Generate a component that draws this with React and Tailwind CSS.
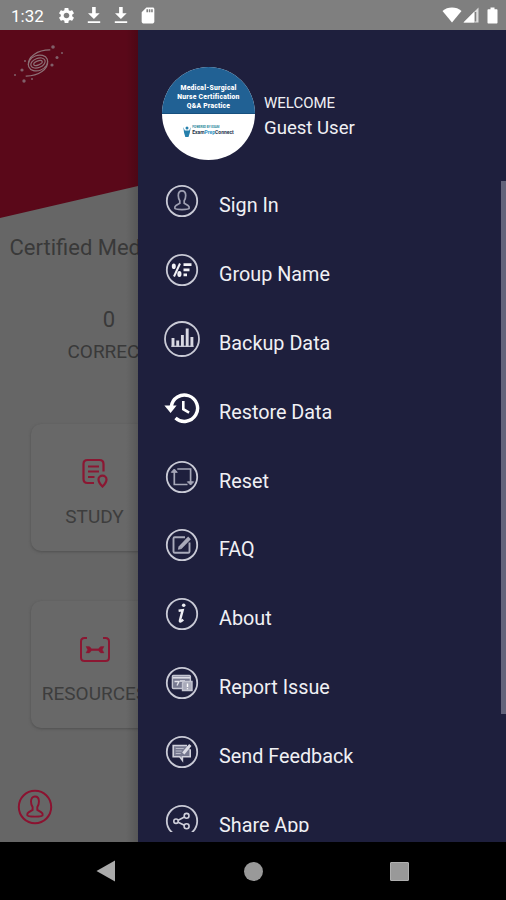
import { MdSettings, MdSdCard } from "react-icons/md";

const Circle = ({ r = 15.2, children }) => (
  <svg viewBox="0 0 36 36" className="w-9 h-9 shrink-0" fill="none" stroke="#c9cad6" strokeWidth="1.4">
    <circle cx="18" cy="18" r={r} strokeWidth="1.8" />
    {children}
  </svg>
);

const personPath =
  "M14.3 12.5c0-3 1.4-4.7 3.7-4.7s3.7 1.7 3.7 4.7c0 2.6-.8 4.2-1.5 5.2v2.6l3.8 2.3c1 .6 1.3 1.6 1.2 2.6-.2 1.8-14.2 1.8-14.4 0-.1-1 .2-2 1.2-2.6l3.8-2.3v-2.6c-.7-1-1.5-2.6-1.5-5.2z";

const SignInIcon = () => (
  <Circle>
    <path d={personPath} stroke="#9fa0b2" strokeWidth="1.7" />
  </Circle>
);

const GroupIcon = () => (
  <Circle>
    <g stroke="#f2f2f6" strokeWidth="2">
      <path d="M16 11.5L10 24.5" />
      <ellipse cx="9.8" cy="14.3" rx="1" ry="1.8" />
      <ellipse cx="15.4" cy="22" rx="1.1" ry="2" />
      <path d="M19.5 12.7h8M19.5 17.8h6M19.5 22.8h3.5" strokeWidth="2.8" />
    </g>
  </Circle>
);

const BackupIcon = () => (
  <Circle r={17}>
    <path d="M9 17v9M13.7 19.5V26M18.4 14v12M23.2 7.5V26M27.9 16v10" stroke="#d8d8e2" strokeWidth="2.9" />
    <path d="M7.5 25.3h22" strokeWidth="1.3" />
  </Circle>
);

const RestoreIcon = () => (
  <svg viewBox="0 0 36 36" className="w-9 h-9 shrink-0" fill="none" stroke="#fff">
    <path d="M7.3 16.5A13.2 13.2 0 1 1 11.5 28" strokeWidth="3.4" />
    <path d="M.4 15.6h12.2L6.6 23z" fill="#fff" stroke="none" />
    <path d="M19.3 11v8.2l5.8 3.4" strokeWidth="2.6" />
  </svg>
);

const ResetIcon = () => (
  <Circle>
    <g stroke="#a5a6b7" strokeWidth="1.7">
      <path d="M10.3 11v14.5h13.2M13.3 10h13.3V24" />
      <path d="M7.3 13.3l3-3.3 3 3.3zM23.4 22.8l3.2 3.2 3-3.2z" fill="#a5a6b7" strokeWidth="1" />
    </g>
  </Circle>
);

const FaqIcon = () => (
  <Circle>
    <g stroke="#a9aaba">
      <path d="M21 10.3H10.8c-.8 0-1.3.5-1.3 1.3v12.9c0 .8.5 1.3 1.3 1.3h13.4c.8 0 1.3-.5 1.3-1.3V15.5" strokeWidth="1.9" />
      <path d="M16.5 20.2l9-9.3" strokeWidth="3.8" />
      <path d="M14.4 22.3l.7-3.2 2.4 2.4z" fill="#a9aaba" strokeWidth=".8" />
    </g>
  </Circle>
);

const AboutIcon = () => (
  <Circle>
    <circle cx="19.7" cy="9.3" r="1.8" fill="#eeeef4" stroke="none" />
    <path d="M14.6 14.7l4.1-.6-2.7 10.2c-.4 1.7.6 1.9 3.2-.6" stroke="#eeeef4" strokeWidth="2.4" />
  </Circle>
);

const ReportIcon = () => (
  <Circle>
    <rect x="8.4" y="10.5" width="18" height="13" rx="1" stroke="#c4c5d1" fill="#777990" />
    <path d="M9 12.7h17" stroke="#dcdce5" strokeWidth="1.8" />
    <path d="M10.5 16.5h4.5l-2 4M16 16h5" stroke="#e4e4eb" />
    <path d="M19.5 16.5h8.5v9h-9.5v-7.2z" fill="#a9aaba" stroke="#c4c5d1" />
    <path d="M23.5 18.5v3.5M23.5 23.3v1" stroke="#fff" />
  </Circle>
);

const FeedbackIcon = () => (
  <Circle>
    <path d="M23 11.5H9.2v11.3h6.5l2.7 3.5v-3.5h7.8v-7.5" fill="#777990" stroke="#d0d0db" strokeWidth="1.6" />
    <path d="M11.7 14.5h8M11.7 17h6M11.7 19.5h5" stroke="#b8b9c7" strokeWidth="1.2" />
    <path d="M19.3 19.5l7-8.5" stroke="#dcdce5" strokeWidth="3" />
  </Circle>
);

const ShareIcon = () => (
  <Circle>
    <g stroke="#d0d0db" strokeWidth="1.6">
      <circle cx="12" cy="18.2" r="2.2" />
      <circle cx="22.6" cy="12.8" r="2.4" />
      <circle cx="22.6" cy="23.3" r="2.5" />
      <path d="M14.2 17.2l6.2-3.2M14.2 19.3l6.2 3" />
    </g>
  </Circle>
);

const menuItems = [
  { label: "Sign In", Icon: SignInIcon },
  { label: "Group Name", Icon: GroupIcon },
  { label: "Backup Data", Icon: BackupIcon },
  { label: "Restore Data", Icon: RestoreIcon },
  { label: "Reset", Icon: ResetIcon },
  { label: "FAQ", Icon: FaqIcon },
  { label: "About", Icon: AboutIcon },
  { label: "Report Issue", Icon: ReportIcon },
  { label: "Send Feedback", Icon: FeedbackIcon },
  { label: "Share App", Icon: ShareIcon },
];

const Download = () => (
  <svg viewBox="0 0 14 18" className="w-3.5 h-[18px]" fill="#fff">
    <path d="M5.1 1h3.6v6.3h4L6.9 13 1 7.3h4.1zM.8 15.2h12.4V17H.8z" />
  </svg>
);

const StatusBar = () => (
  <div className="h-[30px] shrink-0 bg-[#7f7f7f] flex items-center justify-between pl-[11px] pr-[8px] text-white">
    <div className="flex items-center">
      <span className="w-[46px] text-[17px] leading-[30px] pt-0.5">1:32</span>
      <MdSettings className="w-[19px] h-[19px]" />
      <div className="flex gap-[13px] ml-[10.5px]">
        <Download />
        <Download />
      </div>
      <MdSdCard className="w-5 h-[19px] ml-[10.5px]" />
    </div>
    <div className="flex items-center">
      <svg viewBox="0 0 20 16" className="w-5 h-4" fill="#fff">
        <path d="M10 15.5L.5 4C3 1.6 6.5.5 10 .5S17 1.6 19.5 4z" />
      </svg>
      <svg viewBox="0 0 16 16" className="w-4 h-4 ml-px">
        <path d="M.5 15.5L15.5.5v15z" fill="#ddd" />
        <path d="M.5 15.5L11 5v10.5z" fill="#fff" />
        <path d="M12.5 5v9.5" stroke="#7f7f7f" strokeWidth="1.5" />
      </svg>
      <svg viewBox="0 0 11 17" className="w-[11px] h-[17px] ml-[8px]" fill="#fff">
        <path d="M3.5.5h4v1.8h2c.6 0 1 .4 1 1v12.2c0 .6-.4 1-1 1h-8c-.6 0-1-.4-1-1V3.3c0-.6.4-1 1-1h2z" />
      </svg>
    </div>
  </div>
);

const Galaxy = () => (
  <svg viewBox="0 0 52 42" className="w-[52px] h-[42px]" fill="none" stroke="#8d7076" strokeWidth="1.2">
    <g transform="rotate(-22 26 20)">
      <ellipse cx="26" cy="20" rx="10" ry="7.5" />
      <ellipse cx="26" cy="20" rx="7.5" ry="4.6" />
      <ellipse cx="26" cy="20" rx="4.5" ry="2" />
      <path d="M16.3 18.5c2-8 14-11 26-6M35.7 21.5c-2 8-14 11-26 6" />
    </g>
    <g fill="#80606a" stroke="none">
      <circle cx="41" cy="4" r="1.8" />
      <circle cx="50" cy="10" r="1" />
      <circle cx="45" cy="14.5" r="1.5" />
      <circle cx="40" cy="22" r="1.6" />
      <circle cx="13" cy="18" r="1" />
      <circle cx="10" cy="27" r="1.6" />
      <circle cx="3" cy="32" r="1" />
      <circle cx="12" cy="38" r="1.7" />
      <circle cx="20" cy="36" r="1" />
    </g>
  </svg>
);

const Card = ({ label, children }) => (
  <div className="w-[128px] h-[127px] ml-[31px] shrink-0 rounded-[10px] bg-[#686868] shadow-[0_1px_3px_#505050] flex flex-col items-center text-[19px] text-[#3d3d3d]">
    <div className="h-[34px] mt-[32px]">{children}</div>
    <p className="mt-[14px] leading-[26px] -translate-x-[0.5px]">{label}</p>
  </div>
);

const HomeScreen = () => (
  <div className="relative w-[138px] shrink-0 overflow-hidden bg-[#666] text-[#393939] whitespace-nowrap">
    <div className="h-[188px] bg-[#5a0819] pt-[13px] pl-[12px] [clip-path:polygon(0_0,100%_0,100%_83%,0_100%)]">
      <Galaxy />
    </div>
    <p className="pl-[9.5px] mt-[15px] text-[22px] leading-[30px]">Certified Medical</p>
    <div className="w-[218px] text-center mt-[42px]">
      <p className="text-[22px] leading-[30px]">0</p>
      <p className="text-[19px] leading-[26px] mt-[4px]">CORRECT</p>
    </div>
    <div className="flex flex-col gap-[50px] mt-[59px]">
      <Card label="STUDY">
        <svg viewBox="0 0 28 32" className="w-7 h-8" fill="none" stroke="#8b1732" strokeWidth="2.2">
          <path d="M13 27H6.5C4 27 2.5 25.5 2.5 23V8C2.5 5.5 4 4 6.5 4h12c2.5 0 4 1.5 4 4v7.5" />
          <path d="M7 10.5h11M7 15.5h11M7 21h6.5" />
          <path d="M21.5 30.5c-2.5-2.5-4-5-4-7 0-2.3 1.8-3.8 4-3.8s4 1.500 4 3.800c0 2-1.500 4.500-4 7z" />
        </svg>
      </Card>
      <Card label="RESOURCES">
        <svg viewBox="0 0 30 32" className="w-[30px] h-8" fill="none" stroke="#8b1732" strokeWidth="2">
          <path d="M7 5H4.5C2.5 5 1 6.5 1 8.5v16C1 26.5 2.5 28 4.5 28h21c2 0 3.5-1.5 3.5-3.5v-16C29 6.5 27.5 5 25.5 5H23" />
          <path d="M10.5 16.7h9" strokeWidth="2.2" />
          <path d="M6 13.5h2.5c1.6 0 2.7 1.3 2.7 3.2s-1.1 3.2-2.7 3.2H6l1.7-3.2zM24 13.5h-2.5c-1.6 0-2.7 1.3-2.7 3.2s1.1 3.2 2.7 3.2H24l-1.7-3.2z" fill="#8b1732" strokeWidth=".4" />
        </svg>
      </Card>
    </div>
    <svg viewBox="0 0 36 36" className="w-9 h-9 ml-[17px] mt-[61px]" fill="none" stroke="#8b1230" strokeWidth="1.8">
      <circle cx="18" cy="18" r="16.2" strokeWidth="2" />
      <path d={personPath} transform="translate(-1.3 -.8) scale(1.07)" />
    </svg>
    {/* drawer shadow */}
    <div className="absolute right-0 top-0 w-3 h-full bg-linear-to-r from-transparent to-black/15" />
  </div>
);

const Avatar = () => (
  <div className="w-[93px] h-[93px] rounded-full overflow-hidden bg-white shrink-0 flex flex-col">
    <div className="h-[47px] bg-[#216194] border-b border-[#17507e] pt-[17px] text-center text-white text-[6.8px] leading-[9px] font-black tracking-[0.2px] whitespace-nowrap">
      <p>Medical-Surgical</p>
      <p>Nurse Certification</p>
      <p>Q&amp;A Practice</p>
    </div>
    <div className="flex justify-center items-start gap-px pt-[11px]">
      <svg viewBox="0 0 8 12" className="w-2 h-3" fill="#2680ac">
        <circle cx="4" cy="3" r="1.5" />
        <path d="M.3 2l1.5 3.5h4.4L7.7 2l-.8 5.5L5.5 12H2.3L1 7.5z" />
      </svg>
      <div>
        <p className="text-[3px] leading-[4px] text-[#2c8a9c] font-bold">POWERED BY EXAM</p>
        <p className="text-[5px] leading-[6px] font-bold text-[#26364d]">
          Exam<span className="text-[#2f94c4]">Prep</span>Connect
        </p>
      </div>
    </div>
  </div>
);

const Drawer = () => (
  <div className="flex-1 flex flex-col bg-[#1e1f3d] text-[#f0f0f4]">
    <div className="h-[151px] shrink-0 flex pl-[24px] pt-[37px]">
      <Avatar />
      <div className="ml-[9px] pt-[24px]">
        <p className="text-[15px] leading-[24px]">WELCOME</p>
        <p className="text-[18.6px] leading-[26px]">Guest User</p>
      </div>
    </div>
    <div className="h-[651px] flex justify-between overflow-hidden">
      <ul className="pl-[25.5px] pt-[2px]">
        {menuItems.map(({ label, Icon }) => (
          <li key={label} className="h-[68.9px] flex items-start">
            <Icon />
            <span className="ml-[19.5px] mt-[9px] text-[19.8px] leading-[28px]">{label}</span>
          </li>
        ))}
      </ul>
      <div className="w-[5px] h-[533px] bg-[#62637a]" />
    </div>
  </div>
);

const App = () => {
  return (
    <div className="w-[506px] h-[900px] overflow-hidden flex flex-col bg-black font-[Roboto,sans-serif]">
      <StatusBar />
      <div className="h-[812px] flex">
        <HomeScreen />
        <Drawer />
      </div>
      <div className="flex-1 flex items-center justify-between pl-[96px] pr-[97px]">
        <svg viewBox="0 0 20 22" className="w-5 h-[22px]" fill="#aaa">
          <path d="M19 .5v21L.5 11z" />
        </svg>
        <div className="w-[19px] h-[19px] rounded-full bg-[#999]" />
        <div className="w-[19px] h-[19px] rounded-[1px] bg-[#999] border border-[#b0b0b0]" />
      </div>
    </div>
  );
};

export default App;
